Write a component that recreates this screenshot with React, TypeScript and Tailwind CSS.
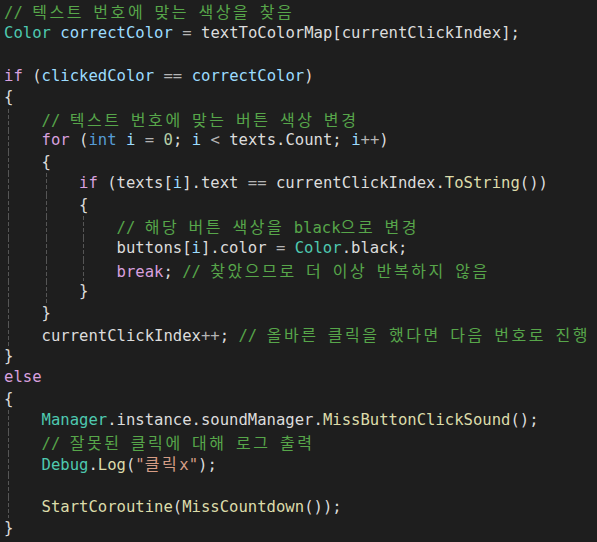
type Tok = [string, string];

const C: Record<string, string> = {
  c: "text-[#57a64a]",
  k: "text-[#d8a0df]",
  kw: "text-[#569cd6]",
  v: "text-[#9cdcfe]",
  t: "text-[#4ec9b0]",
  m: "text-[#dcdcaa]",
  n: "text-[#b5cea8]",
  s: "text-[#d69d85]",
  p: "text-[#dcdcdc]",
  o: "text-[#b4b4b4]",
};

// indent level, tokens
const lines: [number, Tok[]][] = [
  [0, [["c", "// 텍스트 번호에 맞는 색상을 찾음"]]],
  [0, [["t", "Color"], ["p", " "], ["v", "correctColor"], ["p", " "], ["o", "="], ["p", " textToColorMap[currentClickIndex];"]]],
  [0, []],
  [0, [["k", "if"], ["p", " ("], ["v", "clickedColor"], ["p", " "], ["o", "=="], ["p", " "], ["v", "correctColor"], ["p", ")"]]],
  [0, [["p", "{"]]],
  [1, [["c", "// 텍스트 번호에 맞는 버튼 색상 변경"]]],
  [1, [["k", "for"], ["p", " ("], ["kw", "int"], ["p", " "], ["v", "i"], ["p", " "], ["o", "="], ["p", " "], ["n", "0"], ["p", "; "], ["v", "i"], ["p", " "], ["o", "<"], ["p", " texts.Count; "], ["v", "i"], ["o", "++"], ["p", ")"]]],
  [1, [["p", "{"]]],
  [2, [["k", "if"], ["p", " (texts["], ["v", "i"], ["p", "].text "], ["o", "=="], ["p", " currentClickIndex."], ["m", "ToString"], ["p", "())"]]],
  [2, [["p", "{"]]],
  [3, [["c", "// 해당 버튼 색상을 black으로 변경"]]],
  [3, [["p", "buttons["], ["v", "i"], ["p", "].color "], ["o", "="], ["p", " "], ["t", "Color"], ["p", ".black;"]]],
  [3, [["k", "break"], ["p", "; "], ["c", "// 찾았으므로 더 이상 반복하지 않음"]]],
  [2, [["p", "}"]]],
  [1, [["p", "}"]]],
  [1, [["p", "currentClickIndex"], ["o", "++"], ["p", "; "], ["c", "// 올바른 클릭을 했다면 다음 번호로 진행"]]],
  [0, [["p", "}"]]],
  [0, [["k", "else"]]],
  [0, [["p", "{"]]],
  [1, [["t", "Manager"], ["p", ".instance.soundManager."], ["m", "MissButtonClickSound"], ["p", "();"]]],
  [1, [["c", "// 잘못된 클릭에 대해 로그 출력"]]],
  [1, [["t", "Debug"], ["p", "."], ["m", "Log"], ["p", "("], ["s", "\"클릭x\""], ["p", ");"]]],
  [1, []],
  [1, [["m", "StartCoroutine"], ["p", "("], ["m", "MissCountdown"], ["p", "());"]]],
  [0, [["p", "}"]]],
];

function Text({ text }: { text: string }) {
  // hangul runs get the CJK font, spaced out like the editor's fallback
  const parts = text.split(/([\uAC00-\uD7A3]+)/);
  return (
    <>
      {parts.map((part, i) =>
        /[\uAC00-\uD7A3]/.test(part) ? (
          <span key={i} className="font-['Noto_Sans_CJK_KR',sans-serif] text-[16px] tracking-[2.55px]">
            {part}
          </span>
        ) : (
          <span key={i}>{part}</span>
        )
      )}
    </>
  );
}

export default function App() {
  return (
    <div className="w-[597px] h-[542px] overflow-hidden bg-[#1e1e1e] pt-[1px] pl-[4px] font-['DejaVu_Sans_Mono','Noto_Sans_CJK_KR',monospace] text-[15.58px] leading-[21.55px] whitespace-pre">
      {lines.map(([indent, toks], i) => (
        <div key={i} className="flex h-[21.55px]">
          {Array.from({ length: indent }).map((_, j) => (
            <div key={j} className="w-[37.5px] shrink-0 h-full">
              <div className="ml-[4px] w-px h-full bg-[repeating-linear-gradient(to_bottom,#555555_0px,#555555_4px,transparent_4px,transparent_6px)]" />
            </div>
          ))}
          <div>
            {toks.map(([kind, text], k) => (
              <span key={k} className={C[kind]}>
                <Text text={text} />
              </span>
            ))}
          </div>
        </div>
      ))}
    </div>
  );
}
